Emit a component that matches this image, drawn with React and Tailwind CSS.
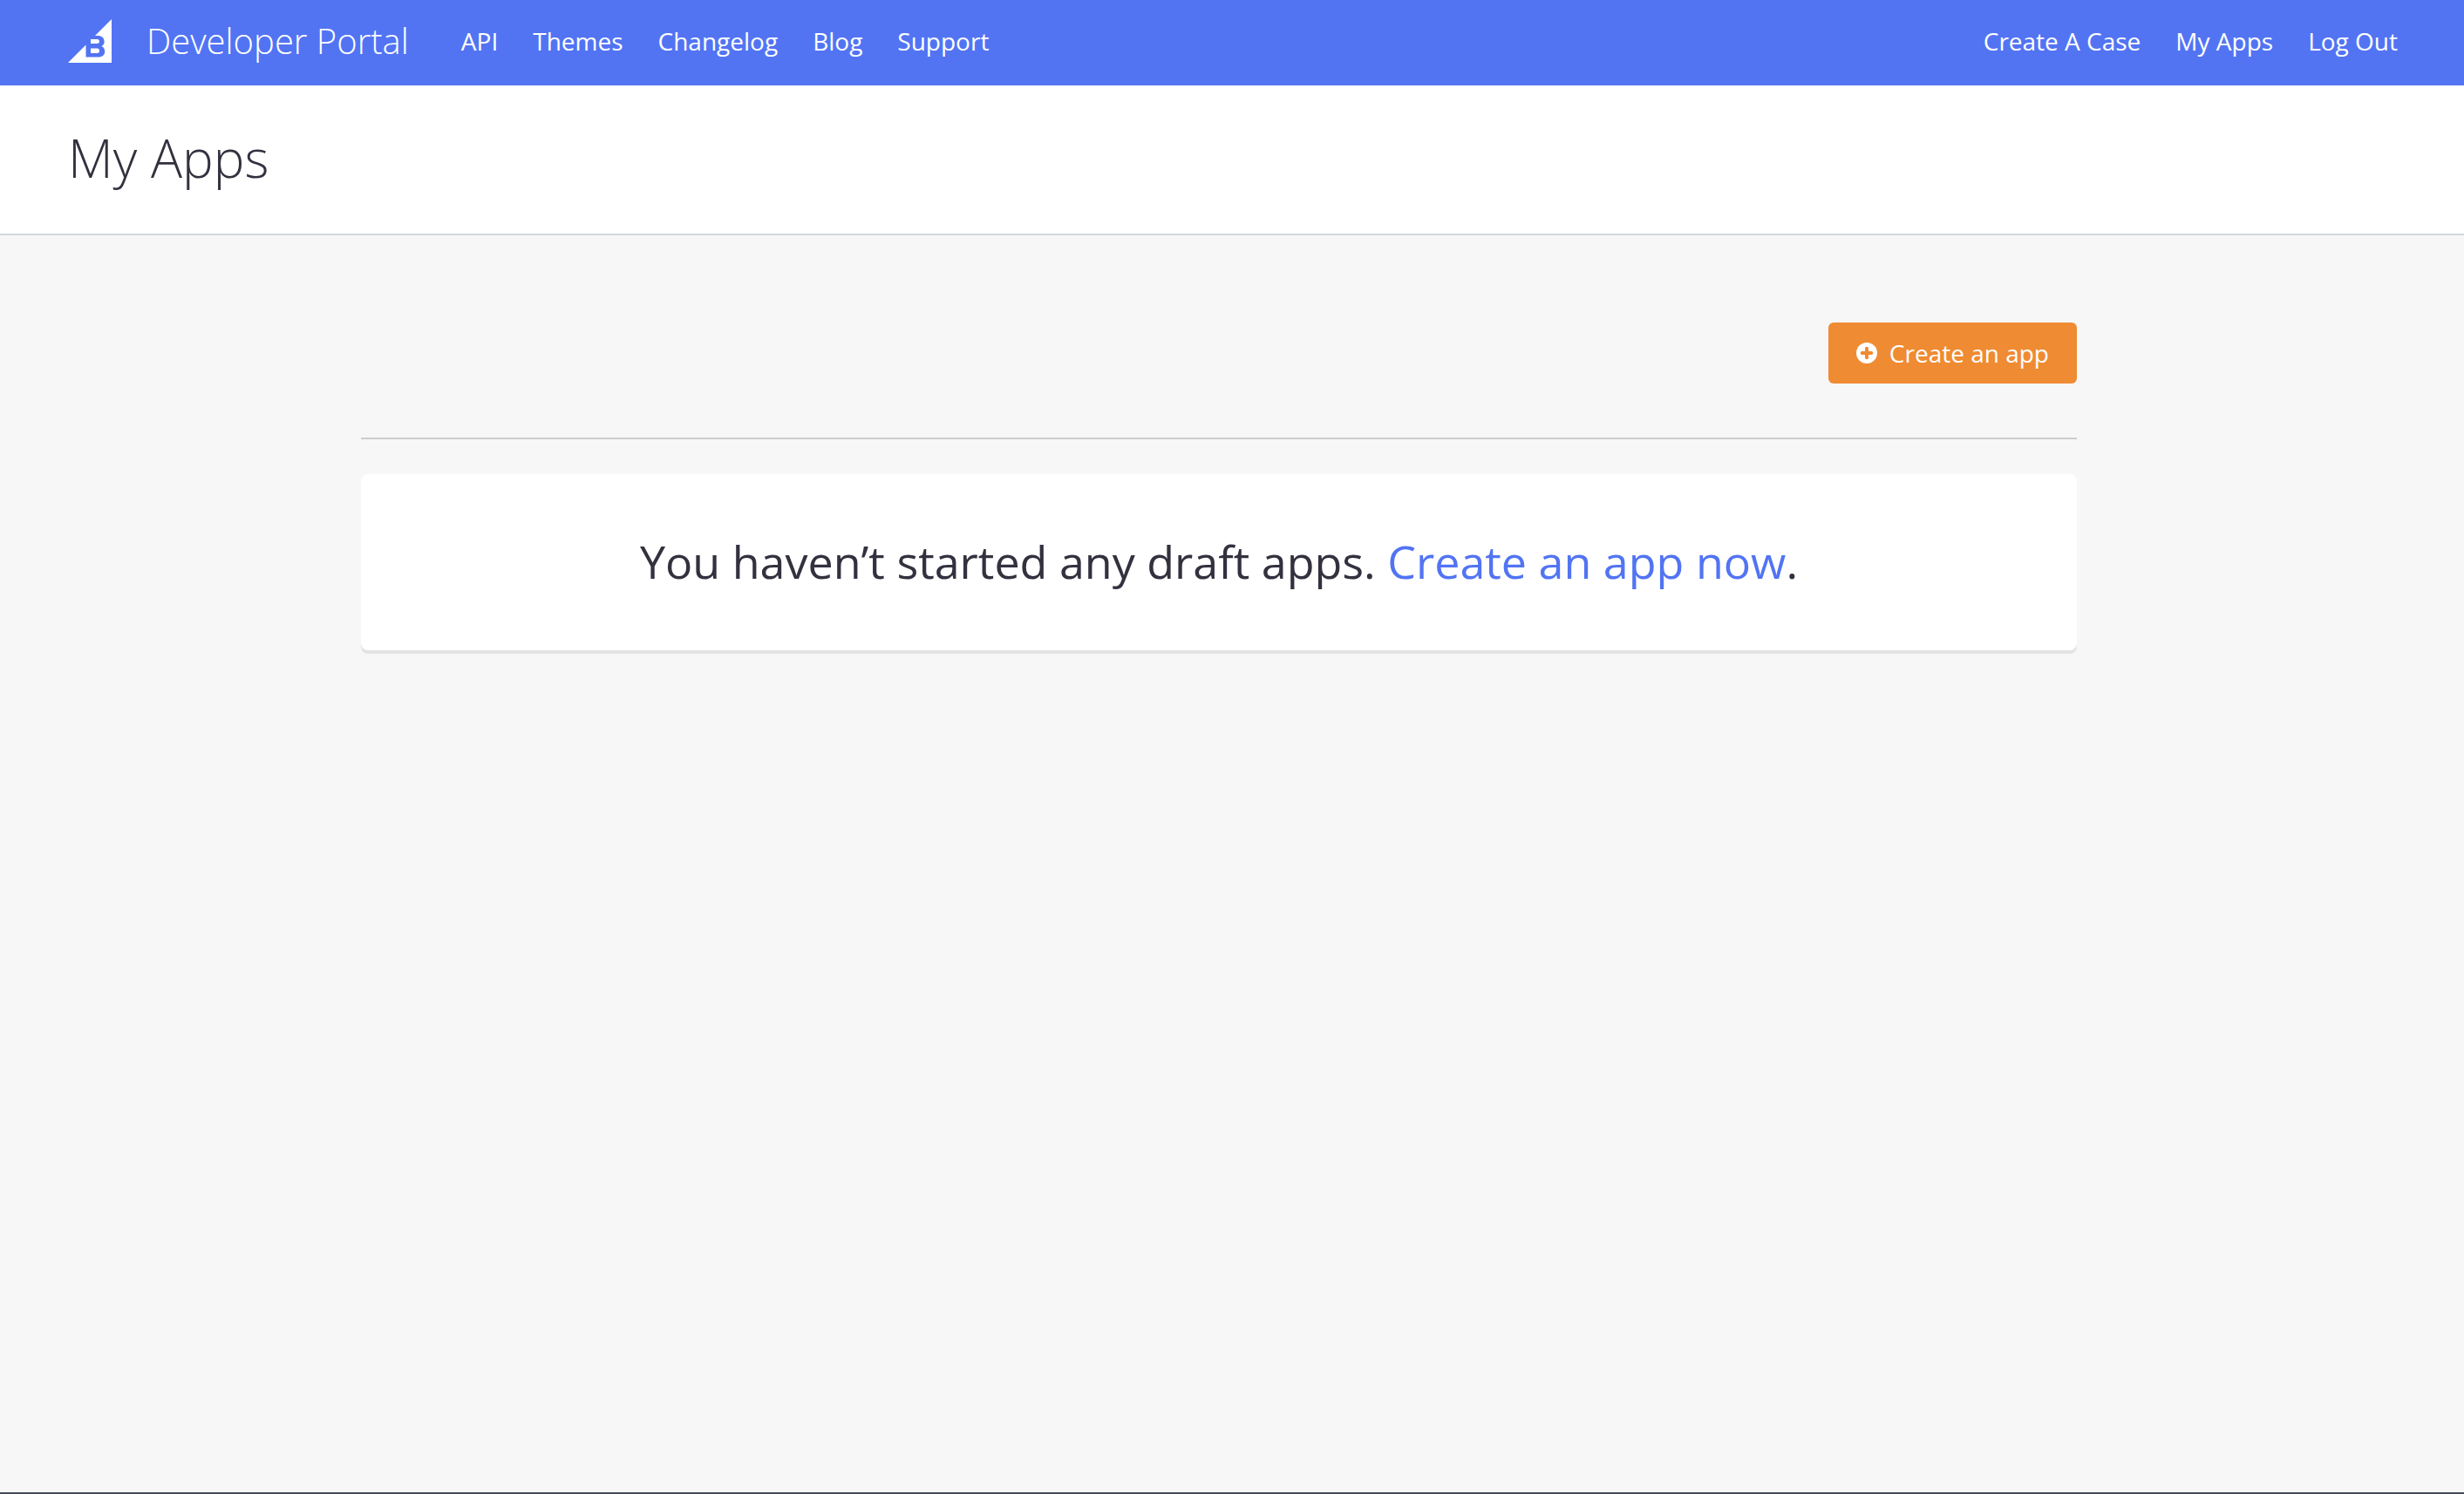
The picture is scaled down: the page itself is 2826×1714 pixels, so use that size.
const primaryLinks = ["API", "Themes", "Changelog", "Blog", "Support"];
const accountLinks = ["Create A Case", "My Apps", "Log Out"];

function Logo() {
  return (
    <svg viewBox="0 0 50 50" className="size-[50px]" fill="none" aria-hidden="true">
      <path d="M50 0V50H0L20.5 29.5V43.5H34.5C39.5 43.5 42.2 41 42.2 37C42.2 34 40.8 32 38.5 31C40.6 30 41.6 28.2 41.6 26C41.6 21.5 38.8 19 34.2 19H31Z" fill="#fff" />
      <path d="M26 23H33.5C35 23 35.9 23.9 35.9 25.5C35.9 27 35 28 33.5 28H26Z" fill="#fff" />
      <path d="M26 33.5H33.5C35.1 33.5 36 34.5 36 36.2C36 37.9 35.1 39 33.5 39H26Z" fill="#fff" />
    </svg>
  );
}

function PlusCircle() {
  return (
    <svg viewBox="0 0 24 24" className="size-6" aria-hidden="true">
      <circle cx="12" cy="12" r="12" fill="#fff" />
      <path d="M12 6.7V17.3M6.7 12H17.3" stroke="#ef8b33" strokeWidth="4" strokeLinecap="round" />
    </svg>
  );
}

function NavLinks({ items, label }) {
  return (
    <nav aria-label={label}>
      <ul className="flex gap-10">
        {items.map((item) => (
          <li key={item}>
            <a href="#" className="block whitespace-nowrap text-[28px] leading-10 font-medium">
              {item}
            </a>
          </li>
        ))}
      </ul>
    </nav>
  );
}

export default function App() {
  return (
    <div className="flex min-h-screen flex-col bg-[#f7f7f7] font-['Open_Sans',sans-serif] text-[#34313f]">
      <header className="flex h-[98px] items-center justify-between bg-[#5274f3] pr-[76px] pb-1 pl-[78px] text-white">
        <div className="flex items-center">
          <a href="#" className="flex items-center gap-10">
            <Logo />
            <span className="whitespace-nowrap text-[40px] leading-12 font-light">Developer Portal</span>
          </a>
          <div className="ml-15">
            <NavLinks items={primaryLinks} label="Primary" />
          </div>
        </div>
        <NavLinks items={accountLinks} label="Account" />
      </header>

      <div className="border-b-2 border-[#d1d8df] bg-white px-[78px] pt-[43px] pb-[47px]">
        <h1 className="text-[60px] leading-20 font-light">My Apps</h1>
      </div>

      <main className="w-full grow pr-[30px]">
        <div className="mx-auto max-w-[1968px] pt-25">
          <div className="flex justify-end border-b-2 border-[#cccccc] pb-[62px]">
            <button type="button" className="flex items-center gap-3.5 rounded-md bg-[#ef8b33] px-8 py-[15px] text-[28px] leading-10 text-white">
              <PlusCircle />
              Create an app
            </button>
          </div>
          <section className="mt-10 rounded-lg bg-white pt-16 pb-[66px] text-center shadow-[0_4px_0_#e3e3e3]">
            <p className="text-[52px] leading-18">
              You haven’t started any draft apps.{" "}
              <a href="#" className="text-[#5274f3]">Create an app now</a>.
            </p>
          </section>
        </div>
      </main>

      <footer className="h-0.5 bg-[#464c57]" />
    </div>
  );
}
